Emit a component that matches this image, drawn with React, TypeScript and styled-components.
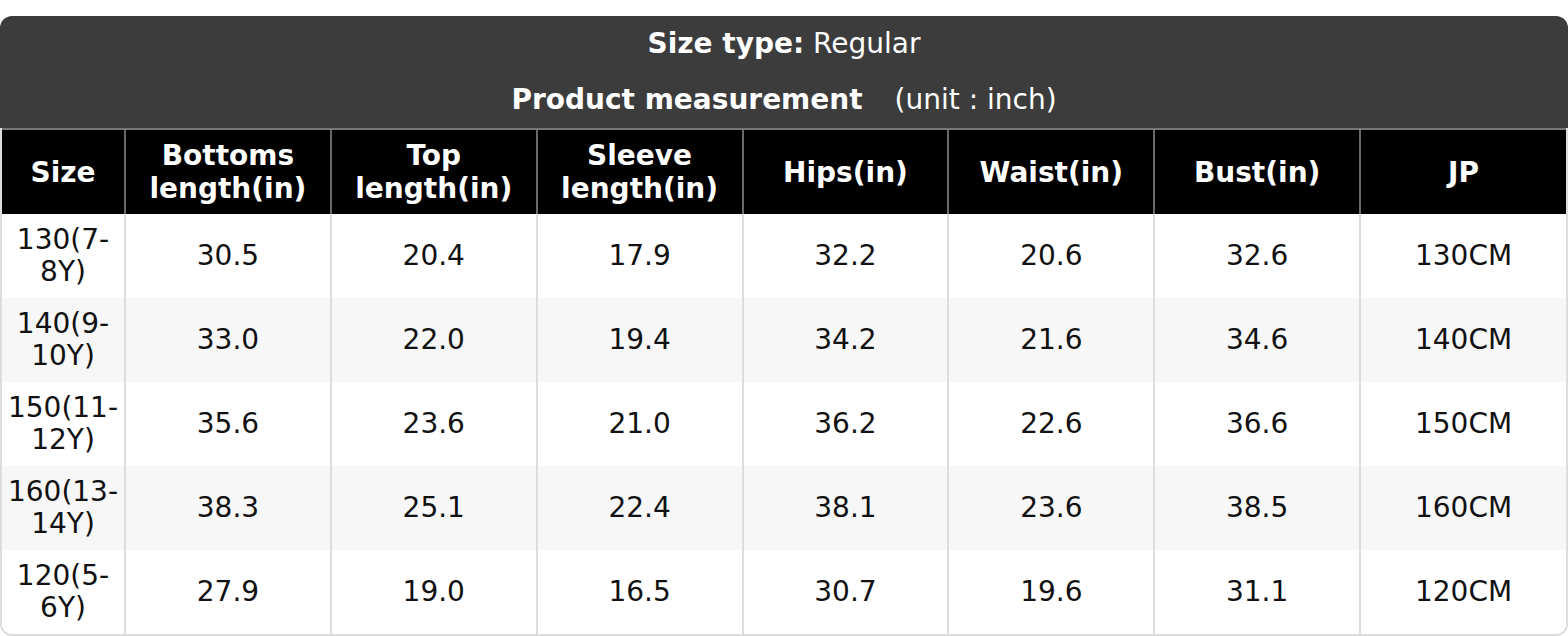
import { FC } from "react";
import styled, { createGlobalStyle } from "styled-components";

const GlobalStyle = createGlobalStyle`
    html, body {
        margin: 0;
        padding: 0;
        background: #ffffff;
    }
    body {
        font-family: "DejaVu Sans", "Liberation Sans", sans-serif;
        color: #111111;
    }
`

const Page = styled.div`
    width: 1568px;
    padding-top: 16px;
`

const TitleBar = styled.header`
    background-color: #3c3c3c;
    border-radius: 12px 12px 0 0;
    color: #ffffff;
    font-size: 28px;
    text-align: center;
`

const TitleLine = styled.div`
    height: 56px;
    line-height: 55px;
    white-space: nowrap;
`

const Strong = styled.b`
    font-weight: 700;
`

const Unit = styled.span`
    margin-left: 32px;
`

const TableWrap = styled.div`
    border: 2px solid #dddddd;
    border-top: none;
    border-radius: 0 0 12px 12px;
    overflow: hidden;
`

const Table = styled.table`
    width: 100%;
    border-collapse: collapse;
    table-layout: fixed;
    font-size: 28px;
`

const HeadCell = styled.th`
    height: 84px;
    padding: 0 4px;
    background-color: #000000;
    color: #ffffff;
    font-weight: 700;
    line-height: 33px;
    text-align: center;
    vertical-align: middle;
    border-top: 2px solid #777777;
    border-left: 2px solid #6a6a6a;

    &:first-child {
        border-left: none;
    }
`

const Row = styled.tr<{ $striped: boolean }>`
    background-color: ${p => (p.$striped ? "#f7f7f7" : "#ffffff")};
`

const Cell = styled.td`
    height: 84px;
    padding: 0 4px;
    line-height: 32px;
    text-align: center;
    vertical-align: middle;
    border-left: 2px solid #dddddd;

    &:first-child {
        border-left: none;
    }
`

const headers = [
    "Size",
    "Bottoms length(in)",
    "Top length(in)",
    "Sleeve length(in)",
    "Hips(in)",
    "Waist(in)",
    "Bust(in)",
    "JP",
]

const rows = [
    ["130(7-8Y)", "30.5", "20.4", "17.9", "32.2", "20.6", "32.6", "130CM"],
    ["140(9-10Y)", "33.0", "22.0", "19.4", "34.2", "21.6", "34.6", "140CM"],
    ["150(11-12Y)", "35.6", "23.6", "21.0", "36.2", "22.6", "36.6", "150CM"],
    ["160(13-14Y)", "38.3", "25.1", "22.4", "38.1", "23.6", "38.5", "160CM"],
    ["120(5-6Y)", "27.9", "19.0", "16.5", "30.7", "19.6", "31.1", "120CM"],
]

const SizeChart: FC = () => {
    return (
        <Page>
            <TitleBar>
                <TitleLine>
                    <Strong>Size type:</Strong> Regular
                </TitleLine>
                <TitleLine>
                    <Strong>Product measurement</Strong>
                    <Unit>(unit : inch)</Unit>
                </TitleLine>
            </TitleBar>
            <TableWrap>
                <Table>
                    <colgroup>
                        <col style={{ width: 123 }} />
                    </colgroup>
                    <thead>
                        <tr>
                            {headers.map(h => (
                                <HeadCell key={h}>{h}</HeadCell>
                            ))}
                        </tr>
                    </thead>
                    <tbody>
                        {rows.map((r, i) => (
                            <Row key={r[0]} $striped={i % 2 === 1}>
                                {r.map((v, j) => (
                                    <Cell key={j}>{v}</Cell>
                                ))}
                            </Row>
                        ))}
                    </tbody>
                </Table>
            </TableWrap>
        </Page>
    )
}

export default function App() {
    return (
        <>
            <GlobalStyle />
            <SizeChart />
        </>
    )
}
